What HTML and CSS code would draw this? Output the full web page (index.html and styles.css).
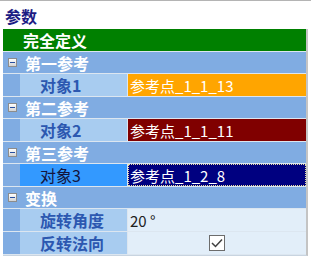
FILE: index.html
```html
<html>
    <head>
        <meta charset="utf-8">
        <link rel="stylesheet" href="styles.css">
    </head>
    <body>
        <div class="panel">
            <div class="title">参数</div>
            <div class="grid">
                <div class="row category">完全定义</div>

                <div class="row group"><span class="toggle"></span>第一参考</div>
                <div class="row item">
                    <div class="indent"></div>
                    <div class="label">对象1</div>
                    <div class="value orange">参考点_1_1_13</div>
                </div>

                <div class="row group"><span class="toggle"></span>第二参考</div>
                <div class="row item">
                    <div class="indent"></div>
                    <div class="label">对象2</div>
                    <div class="value darkred">参考点_1_1_11</div>
                </div>

                <div class="row group"><span class="toggle"></span>第三参考</div>
                <div class="row item">
                    <div class="indent"></div>
                    <div class="label selected">对象3</div>
                    <div class="value navy focus">参考点_1_2_8</div>
                </div>

                <div class="row group"><span class="toggle"></span>变换</div>
                <div class="row item">
                    <div class="indent"></div>
                    <div class="label">旋转角度</div>
                    <div class="value plain">20 °</div>
                </div>
                <div class="row item">
                    <div class="indent"></div>
                    <div class="label">反转法向</div>
                    <div class="value plain center">
                        <span class="check">
                            <svg width="12" height="12" viewBox="0 0 12 12">
                                <path d="M1 6 L4.5 9.5 L11 2.5" fill="none" stroke="#404040" stroke-width="1.5"/>
                            </svg>
                        </span>
                    </div>
                </div>
            </div>
        </div>
    </body>
</html>
```

FILE: styles.css
```css
body
{
    margin: 0;
    background-color: white;
    font-family: "Noto Sans CJK SC", "Noto Sans", sans-serif;
    font-size: 15px;
}
.panel
{
    width: 311px;
    height: 257px;
    border-top: 1px solid #b4b4b4;
    box-sizing: border-box;
}
.title
{
    height: 26px;
    padding: 2px 0 0 5px;
    line-height: 26px;
    font-size: 16px;
    font-weight: bold;
    color: #1c1c84;
}
.grid
{
    margin-left: 3px;
    width: 303px;
    border-bottom: 1px solid #c8d4e0;
    border-right: 2px solid #c4c4c4;
}
.row
{
    display: flex;
    align-items: center;
    border-bottom: 1px solid #dce6f0;
}
.category
{
    height: 22px;
    padding-left: 20px;
    background-color: #008000;
    color: white;
    font-weight: bold;
    font-size: 16px;
}
.group
{
    height: 21px;
    background-color: #80ace2;
    color: white;
    font-weight: bold;
    font-size: 16px;
}
.toggle
{
    width: 7px;
    height: 7px;
    margin: 0 8px 0 5px;
    border: 1px solid #8c8c8c;
    background: linear-gradient(#ffffff, #d4d4d4);
    position: relative;
}
.toggle::after
{
    content: "";
    position: absolute;
    left: 1px;
    top: 3px;
    width: 5px;
    height: 1px;
    background-color: #2850a0;
}
.item
{
    height: 22px;
    align-items: stretch;
}
.indent
{
    width: 17px;
    background-color: #80ace2;
}
.label
{
    width: 108px;
    padding-left: 20px;
    box-sizing: border-box;
    border-right: 1px solid #dce6f0;
    background-color: #a8ccf0;
    color: #2c58b0;
    font-weight: bold;
    font-size: 16px;
    display: flex;
    align-items: center;
}
.label.selected
{
    background-color: #3399ff;
    color: #14143c;
    font-weight: normal;
}
.value
{
    flex: 1;
    padding-left: 2px;
    display: flex;
    align-items: center;
    color: white;
}
.orange
{
    background-color: #ffa500;
}
.darkred
{
    background-color: #800000;
}
.navy
{
    background-color: #000080;
}
.focus
{
    border: 1px dotted #e8e0a0;
    padding-left: 1px;
}
.plain
{
    background-color: #e2eef9;
    color: #202020;
}
.center
{
    justify-content: center;
    padding-left: 0;
}
.check
{
    width: 14px;
    height: 14px;
    border: 1px solid #6c6c6c;
    background-color: white;
    display: flex;
    align-items: center;
    justify-content: center;
}
```
